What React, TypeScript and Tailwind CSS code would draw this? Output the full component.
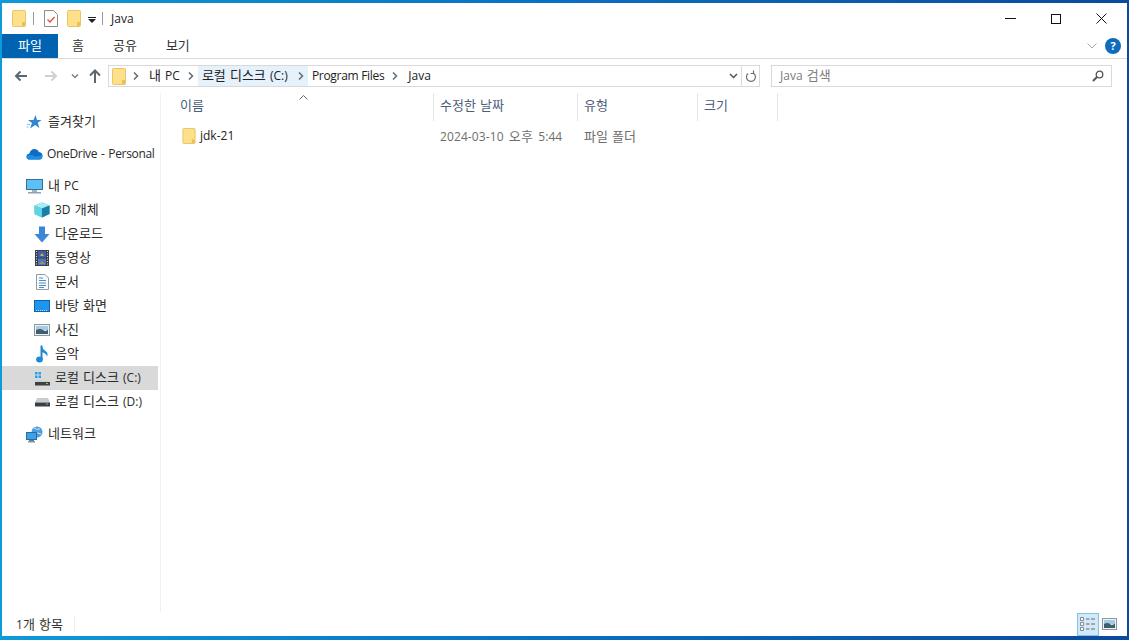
import React from "react";

const FONT = "font-['Open_Sans','Noto_Sans_CJK_KR',sans-serif]";

function T({ text, className = "" }: { text: string; className?: string }) {
  const runs = text.match(/[\uAC00-\uD7A3]+|[^\uAC00-\uD7A3]+/g) ?? [];
  return (
    <span className={`whitespace-nowrap text-[12px] [word-spacing:1px] ${className}`}>
      {runs.map((r, i) => (
        <span key={i} className={/[\uAC00-\uD7A3]/.test(r) ? "text-[13px]" : "text-[12px]"}>{r}</span>
      ))}
    </span>
  );
}

function Folder({ w = 14, h = 17 }: { w?: number; h?: number }) {
  return (
    <svg width={w} height={h} viewBox="0 0 14 17" className="shrink-0">
      <path d="M.5 1.5Q.5.5 1.5.5H12.5Q13.5.5 13.5 1.5V15.5Q13.5 16.5 12.5 16.5H1.5Q.5 16.5.5 15.5Z" fill="#fde08a" stroke="#e9c468" />
      <rect x="10" y="12" width="3" height="4" fill="#eebf55" />
    </svg>
  );
}

function Chevron() {
  return (
    <svg width="6" height="8" viewBox="0 0 6 8" className="shrink-0">
      <path d="M1 .5 4.500 4 1 7.500" fill="none" stroke="#5f6b76" strokeWidth="1.500" />
    </svg>
  );
}

const icons: Record<string, React.ReactNode> = {
  star: (
    <svg width="16" height="16" viewBox="0 0 16 16">
      <path d="M9.500 1 11 6h4.500l-3.700 2.800L13.300 14 9.200 11 4 14.500l2-5.500L2 6h5.500Z" fill="#2f86d6" />
      <path d="M1 10.500h3M.5 13h2" stroke="#7dbcf0" strokeWidth="1" />
    </svg>
  ),
  cloud: (
    <svg width="17" height="12" viewBox="0 0 17 12">
      <path d="M4 11.500Q.5 11.500.5 8.700 .5 6 3.200 5.800 4.500 1 8.700 1 11.600 1 13 4 16.500 4.500 16.500 8 16.500 11.500 13.500 11.500Z" fill="#0f6cc4" />
      <path d="M4 11.500Q.5 11.500.5 8.700 3 5.500 7 7.500 10 9.500 16.300 7 16.500 11.500 13.500 11.500Z" fill="#1b90e0" />
    </svg>
  ),
  pc: (
    <svg width="17" height="15" viewBox="0 0 17 15">
      <rect x=".5" y=".5" width="16" height="10" fill="#5cc0f5" stroke="#3a6f96" />
      <rect x="6" y="11" width="5" height="2" fill="#9fb4c4" />
      <rect x="2" y="13" width="13" height="1.500" fill="#8fa2b1" />
    </svg>
  ),
  cube: (
    <svg width="16" height="16" viewBox="0 0 16 16">
      <path d="M8 .5 15.500 3.500V12L8 15.500.5 12V3.500Z" fill="#2fb5d6" />
      <path d="M.5 3.500 8 .5 15.500 3.500 8 6.500Z" fill="#a6ecf2" />
      <path d="M8 6.500V15.500L.5 12V3.500Z" fill="#63d3e3" />
      <path d="M8 6.500 15.500 3.500V12L8 15.500Z" fill="#1a7fa8" />
    </svg>
  ),
  down: (
    <svg width="16" height="17" viewBox="0 0 16 17">
      <path d="M5 .5H11V8H15.500L8 16.500.5 8H5Z" fill="#3a86d8" />
    </svg>
  ),
  film: (
    <svg width="14" height="16" viewBox="0 0 14 16">
      <rect width="14" height="16" fill="#3b3f45" />
      <rect x="3" y="1" width="8" height="6.500" fill="#3f5fb0" />
      <rect x="3" y="8.500" width="8" height="6.500" fill="#4a78c0" />
      <path d="M5 6l2-3 2 3Z" fill="#c9b14a" />
      <path d="M4 14l3-3 3 3Z" fill="#b58a3c" />
      <path d="M1 1.500h1M1 4h1M1 6.500h1M1 9h1M1 11.500h1M1 14h1M12 1.500h1M12 4h1M12 6.500h1M12 9h1M12 11.500h1M12 14h1" stroke="#d9dde2" strokeWidth="1" />
    </svg>
  ),
  doc: (
    <svg width="13" height="16" viewBox="0 0 13 16">
      <path d="M.5.5H9L12.500 4V15.500H.5Z" fill="#f7fbfe" stroke="#8b9dab" />
      <path d="M3 4h4M3 6.500h7M3 9h7M3 11.500h7M3 13.500h5" stroke="#4f8fc0" strokeWidth="1" />
    </svg>
  ),
  desktop: (
    <svg width="16" height="12" viewBox="0 0 16 12">
      <rect x=".5" y=".5" width="15" height="11" fill="#1e96f0" stroke="#0f62ab" />
      <path d="M2 10.500h12" stroke="#bde0fa" strokeDasharray="1 1" />
    </svg>
  ),
  photo: (
    <svg width="16" height="12" viewBox="0 0 16 12">
      <rect x=".5" y=".5" width="15" height="11" fill="#eef3f6" stroke="#8a98a5" />
      <rect x="2" y="2" width="12" height="4" fill="#a8cbe2" />
      <path d="M2 6q4-2 7 0t5-.5V10H2Z" fill="#3f5f6e" />
    </svg>
  ),
  music: (
    <svg width="13" height="18" viewBox="0 0 13 18">
      <path d="M5.500 .5V14" stroke="#1e88d8" strokeWidth="2" fill="none" />
      <ellipse cx="3.500" cy="14.500" rx="3.400" ry="3" fill="#1e88d8" />
      <path d="M5.500 .5Q6.500 4.500 10 6.500 12.500 8.500 11 11.500 10.500 8 5.500 7Z" fill="#1e88d8" />
    </svg>
  ),
  diskC: (
    <svg width="15" height="15" viewBox="0 0 15 15">
      <path d="M0 1h2.500v2.500H0ZM3.500 1H6v2.500H3.500ZM0 4.500h2.500V7H0ZM3.500 4.500H6V7H3.500Z" fill="#1ea3e8" />
      <path d="M1 9.500H13L14.500 11H0Z" fill="#c8cdd1" />
      <rect y="11" width="15" height="3.500" fill="#3b4044" />
      <rect x="11" y="12" width="2" height="1" fill="#7fd13b" />
    </svg>
  ),
  diskD: (
    <svg width="15" height="9" viewBox="0 0 15 9">
      <path d="M2 0H13L15 4.500H0Z" fill="#c8cdd1" />
      <rect y="4.500" width="15" height="4" fill="#3b4044" />
      <rect x="11" y="5.500" width="2" height="1" fill="#9aa0a5" />
    </svg>
  ),
  net: (
    <svg width="17" height="17" viewBox="0 0 17 17">
      <circle cx="11" cy="6" r="5.500" fill="#4f9fe0" />
      <path d="M8 2q3 2 6 1M7 7q4-1 8 1" stroke="#c6e3f7" fill="none" />
      <rect x=".5" y="6.500" width="10" height="7" fill="#3aa0e8" stroke="#2c6a9c" />
      <rect x="3" y="14" width="5" height="1" fill="#5f7f98" />
      <rect x="2" y="15" width="7" height="1.500" fill="#7f97a8" />
    </svg>
  ),
};

function NavRow({ icon, label, indent, selected, gap, tight }: { icon: string; label: string; indent?: boolean; selected?: boolean; gap?: boolean; tight?: boolean }) {
  return (
    <div className={`flex h-6 items-center ${selected ? "bg-[#d9d9d9]" : ""} ${gap ? "mt-2" : ""}`}>
      <div className={`flex h-6 w-[18px] items-center justify-center ${indent ? "ml-[31px]" : "ml-[23px]"}`}>{icons[icon]}</div>
      <T text={label} className={`text-[#2a2a2a] ${indent ? "ml-[4px]" : tight ? "ml-[4px] tracking-[-0.33px]" : "ml-[5px]"}`} />
    </div>
  );
}

function Column({ label, w }: { label: string; w: string }) {
  return (
    <div className={`flex h-[28px] items-center border-r border-[#e5e5e5] pb-[2px] pl-[6px] text-[#4c607a] ${w}`}>
      <T text={label} />
    </div>
  );
}

export default function App() {
  return (
    <div className={`flex h-[640px] w-[1129px] flex-col overflow-hidden bg-gradient-to-r from-[#0f9ad8] via-[#0a6fc0] to-[#0b4a9c] pb-[4px] pl-[2px] pr-[2px] pt-[3px] ${FONT}`}>
      <div className="flex min-h-0 flex-1 flex-col bg-white">
        {/* title bar */}
        <div className="flex h-[31px] shrink-0 items-center pl-[10px]">
          <Folder />
          <div className="ml-[7px] h-[13px] w-px bg-[#9a9a9a]" />
          <svg width="14" height="17" viewBox="0 0 14 17" className="ml-[10px]">
            <path d="M.5.5H9.500L13.500 4.500V16.500H.5Z" fill="#fff" stroke="#8d8d8d" />
            <path d="M3.500 9.500l2.500 2.500 4.500-5" fill="none" stroke="#e2502e" strokeWidth="1.400" />
          </svg>
          <div className="ml-[9px]"><Folder /></div>
          <svg width="8" height="7" viewBox="0 0 8 7" className="ml-[7px] mt-[3px]">
            <path d="M0 .5h8" stroke="#222" />
            <path d="M0 2h8L4 6Z" fill="#222" />
          </svg>
          <div className="ml-[6px] h-[13px] w-px bg-[#9a9a9a]" />
          <span className="ml-[8px] text-[12px] text-[#222]">Java</span>
          <div className="ml-auto mr-[20px] flex items-center">
            <svg width="11" height="11" viewBox="0 0 11 11"><path d="M0 5.500h11" stroke="#111" /></svg>
            <svg width="10" height="10" viewBox="0 0 10 10" className="ml-[35px]"><rect x=".5" y=".5" width="9" height="9" fill="none" stroke="#111" /></svg>
            <svg width="11" height="11" viewBox="0 0 11 11" className="ml-[35px]"><path d="M.5.5l10 10M10.500.5l-10 10" stroke="#111" /></svg>
          </div>
        </div>
        {/* ribbon tabs */}
        <div className="flex h-[25px] shrink-0 items-stretch border-b border-[#dadada]">
          <div className="flex h-6 w-14 items-center justify-center bg-[#0063b1] text-white"><T text="파일" /></div>
          <div className="ml-[14px] flex h-6 items-center text-[#333]"><T text="홈" /></div>
          <div className="ml-[29px] flex h-6 items-center text-[#333]"><T text="공유" /></div>
          <div className="ml-[29px] flex h-6 items-center text-[#333]"><T text="보기" /></div>
          <div className="ml-auto mr-[6px] flex h-6 items-center">
            <svg width="10" height="6" viewBox="0 0 10 6"><path d="M.5.5 5 5 9.500.5" fill="none" stroke="#a8a8a8" /></svg>
            <div className="ml-[8px] flex h-4 w-4 items-center justify-center rounded-full bg-[#0f6cbd] text-[11px] font-bold text-white">?</div>
          </div>
        </div>
        {/* address row */}
        <div className="flex h-[34px] shrink-0 items-center">
          <svg width="14" height="12" viewBox="0 0 14 12" className="ml-[12px]"><path d="M13 6H2M6.500 1.500 2 6l4.500 4.500" fill="none" stroke="#5d6770" strokeWidth="2" /></svg>
          <svg width="14" height="12" viewBox="0 0 14 12" className="ml-[16px]"><path d="M1 6h11M7.500 1.500 12 6l-4.500 4.500" fill="none" stroke="#d0d0d0" strokeWidth="2" /></svg>
          <svg width="8" height="5" viewBox="0 0 8 5" className="ml-[13px]"><path d="M1 .5 4 3.500 7 .5" fill="none" stroke="#7a8188" strokeWidth="1.500" /></svg>
          <svg width="12" height="14" viewBox="0 0 12 14" className="ml-[10px]"><path d="M6 14V2M1 6.500 6 1.500l5 5" fill="none" stroke="#5d6770" strokeWidth="2" /></svg>
          <div className="ml-[7px] flex h-[22px] w-[652px] items-center border border-[#d9d9d9]">
            <div className="ml-[3px]"><Folder w={14} h={17} /></div>
            <div className="ml-[7px]"><Chevron /></div>
            <T text="내 PC" className="ml-[10px] text-[#222]" />
            <div className="ml-[8px]"><Chevron /></div>
            <div className="ml-[4px] flex h-full w-[110px] items-center bg-[#e5f1fb]">
              <T text="로컬 디스크 (C:)" className="ml-[4px] w-[96px] text-[#222]" />
              <Chevron />
            </div>
            <span className="ml-[4px] whitespace-nowrap text-[12px] tracking-[-0.3px] text-[#222]">Program Files</span>
            <div className="ml-[8px]"><Chevron /></div>
            <span className="ml-[10px] text-[12px] text-[#222]">Java</span>
            <div className="ml-auto flex h-full items-center">
              <svg width="9" height="6" viewBox="0 0 9 6" className="mr-[3px]"><path d="M1 1l3.500 3.500L8 1" fill="none" stroke="#555" strokeWidth="1.500" /></svg>
              <div className="flex h-full w-[18px] items-center justify-center border-l border-[#d9d9d9]">
                <svg width="12" height="13" viewBox="0 0 12 13"><path d="M3 3.500a4.500 4.500 0 1 0 5.500-.3M8.500 .5V3.500H5.500" fill="none" stroke="#6a6f74" strokeWidth="1.200" /></svg>
              </div>
            </div>
          </div>
          <div className="ml-[11px] flex h-[22px] w-[341px] items-center border border-[#d9d9d9] pl-[8px] pr-[7px]">
            <T text="Java 검색" className="text-[#7d7d7d]" />
            <svg width="12" height="12" viewBox="0 0 12 12" className="ml-auto"><circle cx="7.500" cy="4.500" r="3.300" fill="none" stroke="#555" strokeWidth="1.300" /><path d="M5 7 1 11" stroke="#555" strokeWidth="2" /></svg>
          </div>
        </div>
        {/* main */}
        <div className="flex min-h-0 flex-1">
          <div className="w-[159px] shrink-0 border-r border-[#f0f0f0] pt-[17px]">
            <div className="w-[156px]">
              <NavRow icon="star" label="즐겨찾기" />
              <NavRow icon="cloud" label="OneDrive - Personal" gap tight />
              <NavRow icon="pc" label="내 PC" gap />
              <NavRow icon="cube" label="3D 개체" indent />
              <NavRow icon="down" label="다운로드" indent />
              <NavRow icon="film" label="동영상" indent />
              <NavRow icon="doc" label="문서" indent />
              <NavRow icon="desktop" label="바탕 화면" indent />
              <NavRow icon="photo" label="사진" indent />
              <NavRow icon="music" label="음악" indent />
              <NavRow icon="diskC" label="로컬 디스크 (C:)" indent selected />
              <NavRow icon="diskD" label="로컬 디스크 (D:)" indent />
              <NavRow icon="net" label="네트워크" gap />
            </div>
          </div>
          <div className="relative min-w-0 flex-1">
            <svg width="9" height="5" viewBox="0 0 9 5" className="absolute left-[138px] top-[2px]"><path d="M.5 4.500 4.500.5 8.500 4.500" fill="none" stroke="#6a6a6a" /></svg>
            <div className="flex">
              <div className="flex h-[28px] w-[273px] items-center border-r border-[#e5e5e5] pb-[2px] pl-[19px] text-[#4c607a]">
                <T text="이름" />
              </div>
              <Column label="수정한 날짜" w="w-[144px]" />
              <Column label="유형" w="w-[120px]" />
              <Column label="크기" w="w-[80px]" />
            </div>
            <div className="mt-[4px] flex h-[22px] items-center">
              <div className="flex w-[273px] items-center pl-[21px]">
                <Folder w={14} h={16} />
                <span className="ml-[4px] text-[12px] text-[#222]">jdk-21</span>
              </div>
              <div className="mb-[3px] w-[144px] pl-[6px] text-[#6d6d6d]"><T text="2024-03-10 오후 5:44" className="tracking-[0.1px] [word-spacing:2px]" /></div>
              <div className="mb-[3px] w-[120px] pl-[6px] text-[#6d6d6d]"><T text="파일 폴더" /></div>
            </div>
          </div>
        </div>
        {/* status */}
        <div className="flex h-6 shrink-0 items-center">
          <T text="1개 항목" className="ml-[14px] mt-[1px] text-[#333]" />
          <div className="ml-[11px] h-4 w-px bg-[#f0f0f0]" />
          <div className="ml-auto mr-[10px] flex items-center">
            <div className="flex h-[23px] w-[22px] items-center justify-center border border-[#7fc4e6] bg-[#d3e9f7]">
              <svg width="16" height="16" viewBox="0 0 16 16">
                <path d="M.5 1.500h3v3h-3ZM.5 6.500h3v3h-3ZM.5 11.500h3v3h-3Z" fill="#fff" stroke="#7a8a96" />
                <path d="M6 3h3.500M11 3h4M6 8h3.500M11 8h4M6 13h3.500M11 13h4" stroke="#5d6c78" />
              </svg>
            </div>
            <svg width="15" height="12" viewBox="0 0 15 12" className="ml-[3px]">
              <rect x=".5" y=".5" width="14" height="11" fill="#eef3f6" stroke="#8a98a5" />
              <rect x="2" y="2" width="11" height="4" fill="#a8cbe2" />
              <path d="M2 6q4-2 6 0t5-.5V10H2Z" fill="#3f5f6e" />
            </svg>
          </div>
        </div>
      </div>
    </div>
  );
}
